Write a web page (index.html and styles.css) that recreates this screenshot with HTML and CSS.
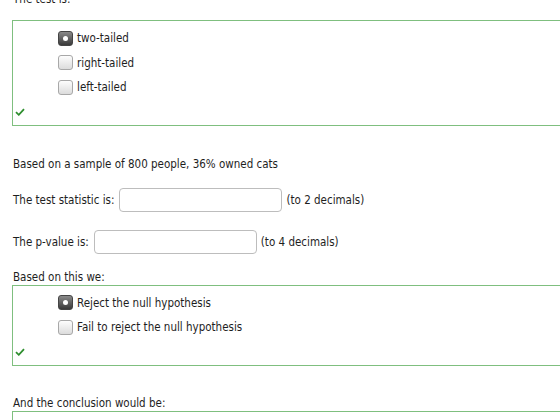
FILE: index.html
```html
<!DOCTYPE html>
<html>
<head>
  <title>Hypothesis Test</title>
  <link rel="stylesheet" href="styles.css">
</head>
<body>
  <div class="page">
    <div class="label first-label">The test is:</div>
    <div class="answer-box">
      <div class="option"><span class="radio checked"></span>two-tailed</div>
      <div class="option"><span class="radio"></span>right-tailed</div>
      <div class="option"><span class="radio"></span>left-tailed</div>
      <div class="check-row">
        <svg class="check" width="10" height="8" viewBox="0 0 10 8"><path d="M1 4.2 L3.8 6.8 L9 1.2" fill="none" stroke="#2f8f2f" stroke-width="1.8"/></svg>
      </div>
    </div>

    <div class="label sample">Based on a sample of 800 people, 36% owned cats</div>

    <div class="field-row">
      <span>The test statistic is:</span>
      <input type="text" class="answer-input">
      <span>(to 2 decimals)</span>
    </div>
    <div class="field-row">
      <span>The p-value is:</span>
      <input type="text" class="answer-input">
      <span>(to 4 decimals)</span>
    </div>

    <div class="label">Based on this we:</div>
    <div class="answer-box">
      <div class="option"><span class="radio checked"></span>Reject the null hypothesis</div>
      <div class="option"><span class="radio"></span>Fail to reject the null hypothesis</div>
      <div class="check-row">
        <svg class="check" width="10" height="8" viewBox="0 0 10 8"><path d="M1 4.2 L3.8 6.8 L9 1.2" fill="none" stroke="#2f8f2f" stroke-width="1.8"/></svg>
      </div>
    </div>

    <div class="label conclusion">And the conclusion would be:</div>
    <div class="answer-box">
      <div class="option"><span class="radio"></span>There is sufficient evidence</div>
    </div>
  </div>
</body>
</html>
```

FILE: styles.css
```css
html, body {
  margin: 0;
  padding: 0;
  overflow: hidden;
  background: #fff;
}
body {
  font-family: "DejaVu Sans Condensed", "DejaVu Sans", Verdana, sans-serif;
  font-size: 11.5px;
  color: #1e1e1e;
}
.page {
  width: 640px;
  padding-left: 12px;
  margin-top: -9px;
}
.label {
  height: 16px;
  line-height: 16px;
  padding-left: 1px;
}
.first-label {
  margin-bottom: 13px;
}
.sample {
  margin-top: 30px;
}
.conclusion {
  margin-top: 29px;
}
.answer-box {
  border: 1px solid #7fbf7f;
  border-right: none;
  padding-top: 5px;
}
.option {
  display: flex;
  align-items: center;
  height: 24.5px;
  padding-left: 45px;
}
.radio {
  width: 13px;
  height: 13px;
  border: 1px solid #a8a8a8;
  border-radius: 3px;
  background: linear-gradient(#fdfdfd, #dcdcdc);
  margin-right: 4px;
  display: flex;
  align-items: center;
  justify-content: center;
  box-sizing: content-box;
}
.radio.checked {
  border-color: #444;
  background: linear-gradient(#8a8a8a, #3a3a3a);
}
.radio.checked:before {
  content: "";
  width: 5px;
  height: 5px;
  border-radius: 50%;
  background: #fff;
}
.check-row {
  height: 25px;
  display: flex;
  align-items: center;
  padding-left: 2px;
}
.field-row {
  display: flex;
  align-items: center;
  height: 24px;
  padding-left: 1px;
  margin-top: 16px;
}
.field-row + .field-row {
  margin-top: 18px;
}
.field-row + .label {
  margin-top: 15px;
}
.answer-input {
  width: 163px;
  height: 24px;
  box-sizing: border-box;
  border: 1px solid #bdbdbd;
  border-radius: 4px;
  margin: 0 4px 0 5px;
  padding: 0 4px;
  font: inherit;
}
```
